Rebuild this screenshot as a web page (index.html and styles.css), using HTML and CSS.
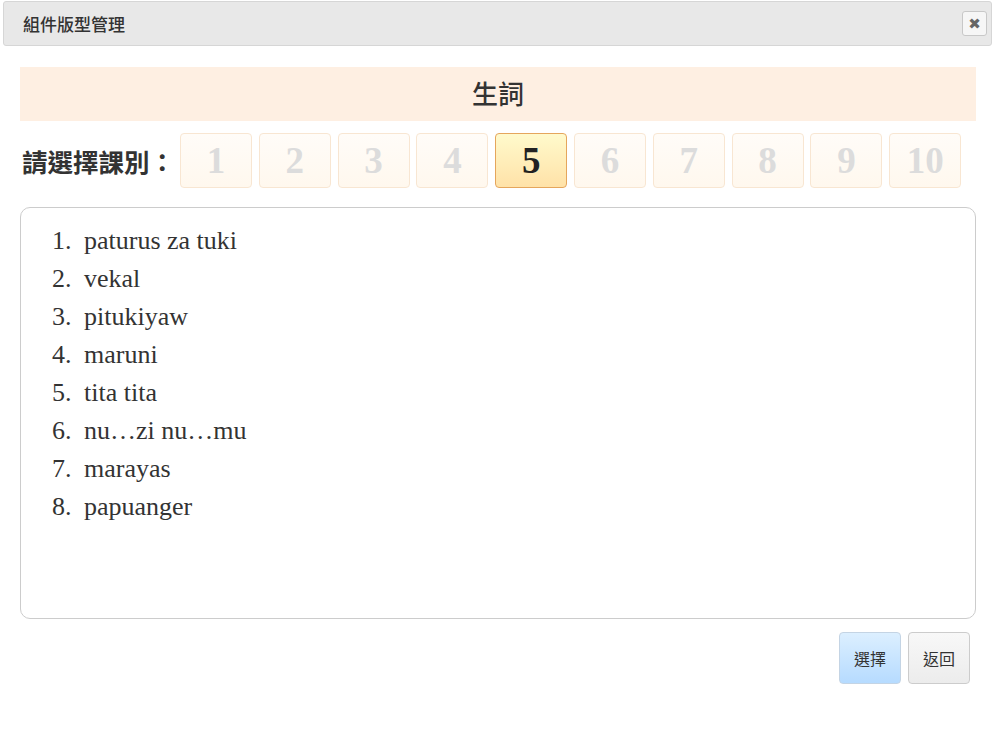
FILE: index.html
```html
<!DOCTYPE html>
<html>
<head>
<meta charset="utf-8">
<link rel="stylesheet" href="styles.css">
</head>
<body>
<div class="titlebar">
  <span class="title">組件版型管理</span>
  <button class="close">✖</button>
</div>
<div class="content">
  <div class="heading">生詞</div>
  <div class="lessons">
    <span class="label">請選擇課別：</span>
    <div class="nums">
      <div class="num">1</div>
      <div class="num">2</div>
      <div class="num">3</div>
      <div class="num">4</div>
      <div class="num active">5</div>
      <div class="num">6</div>
      <div class="num">7</div>
      <div class="num">8</div>
      <div class="num">9</div>
      <div class="num">10</div>
    </div>
  </div>
  <div class="listbox">
    <ol class="words">
      <li>paturus za tuki</li>
      <li>vekal</li>
      <li>pitukiyaw</li>
      <li>maruni</li>
      <li>tita tita</li>
      <li>nu…zi nu…mu</li>
      <li>marayas</li>
      <li>papuanger</li>
    </ol>
  </div>
  <div class="actions">
    <button class="btn primary">選擇</button>
    <button class="btn">返回</button>
  </div>
</div>
</body>
</html>
```
FILE: styles.css
```css
* { box-sizing: border-box; }
body {
  margin: 0;
  background: #fff;
  font-family: "Noto Sans CJK TC", "Noto Sans", sans-serif;
  color: #333;
}
.titlebar {
  margin: 1px 3px 0 3px;
  height: 45px;
  background: #e8e8e8;
  border: 1px solid #d6d6d6;
  border-radius: 3px;
  display: flex;
  align-items: center;
  justify-content: space-between;
  padding: 0 4px 0 19px;
}
.title {
  font-size: 17px;
  color: #333;
  font-weight: 500;
}
.close {
  width: 25px;
  height: 25px;
  border: 1px solid #c8c8c8;
  border-radius: 3px;
  background: #f6f6f6;
  color: #666;
  font-size: 15px;
  padding: 0;
  line-height: 22px;
  font-family: "DejaVu Sans", sans-serif;
}
.content {
  padding: 21px 19px 0 20px;
}
.heading {
  height: 54px;
  background: #feefe2;
  text-align: center;
  font-size: 26px;
  line-height: 52px;
  font-weight: 500;
  color: #333;
}
.lessons {
  display: flex;
  align-items: center;
  margin-top: 12px;
}
.label {
  font-size: 25.5px;
  font-weight: 700;
  color: #333;
  margin-left: 2px;
  width: 158px;
  white-space: nowrap;
}
.nums {
  display: flex;
  gap: 6.8px;
}
.num {
  width: 72px;
  height: 55px;
  border: 1px solid #f8e6d2;
  border-radius: 4px;
  background: linear-gradient(#fffcf8, #fff8ee);
  color: #dcdcdc;
  font-family: "Liberation Serif", serif;
  font-weight: 700;
  font-size: 37px;
  display: flex;
  align-items: center;
  justify-content: center;
}
.num.active {
  background: linear-gradient(#fffacc, #ffe2a8);
  border-color: #e5a65c;
  color: #222;
}
.listbox {
  margin-top: 19px;
  height: 412px;
  border: 1px solid #cccccc;
  border-radius: 10px;
  padding: 14px 0 0 0;
}
.words {
  margin: 0;
  padding-left: 57px;
  font-family: "Liberation Serif", serif;
  font-size: 26px;
  line-height: 38px;
  color: #333;
}
.words li { padding-left: 6px; }
.actions {
  display: flex;
  justify-content: flex-end;
  gap: 7px;
  margin-top: 13px;
  padding-right: 6px;
}
.btn {
  width: 62px;
  height: 52px;
  border: 1px solid #cccccc;
  border-radius: 4px;
  background: linear-gradient(#f8f8f8, #ececec);
  font-family: "Noto Sans CJK TC", sans-serif;
  font-size: 16px;
  color: #333;
  padding: 0;
}
.btn.primary {
  background: linear-gradient(#dcefff, #b6dbff);
  border-color: #c4d4e4;
}
```
